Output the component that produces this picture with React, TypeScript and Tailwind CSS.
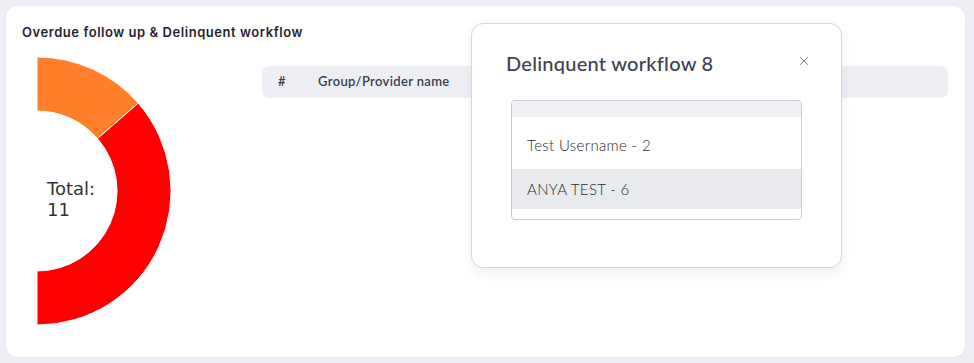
import { X } from 'lucide-react';

const workflowItems = [
  { id: 'u-1', label: 'Test Username - 2', active: false },
  { id: 'u-2', label: 'ANYA TEST - 6', active: true },
];

const DonutChart = () => {
  return (
    <div className="relative w-[134px] h-[268px] shrink-0">
      <svg width="134" height="268" viewBox="0 0 134 268">
        <path
          d="M0 0 A134 134 0 0 1 101.3 46.2 L60.5 81.6 A80 80 0 0 0 0 54 Z"
          fill="#ff7f2a"
          stroke="#ffffff"
          strokeWidth="1"
        />
        <path
          d="M101.3 46.2 A134 134 0 0 1 0 268 L0 214 A80 80 0 0 0 60.5 81.6 Z"
          fill="#ff0000"
          stroke="#ffffff"
          strokeWidth="1"
        />
      </svg>
      <p
        className="absolute left-[10px] top-[121px] text-[18px] leading-[21px] text-[#333333]"
        style={{ fontFamily: '"DejaVu Sans", sans-serif' }}
      >
        Total:
        <br />
        11
      </p>
    </div>
  );
};

const App = () => {
  return (
    <div
      className="relative w-[974px] h-[363px] bg-[#eeeef4] p-[6px] pr-[9px] pb-[6px]"
      style={{ fontFamily: 'Lato, "Noto Sans", sans-serif' }}
    >
      <div className="h-full bg-white rounded-[12px] pl-4 pr-[17px] pt-[18px] shadow-[0_0_4px_rgba(0,0,0,0.04)]">
        <h2
          className="text-[13px] leading-4 font-semibold tracking-[0.55px] text-[#1f2430]"
          style={{ fontFamily: 'Inter, sans-serif' }}
        >
          Overdue follow up &amp; Delinquent workflow
        </h2>

        <div className="flex mt-[17px]">
          <div className="ml-[15px]">
            <DonutChart />
          </div>

          <div className="flex-1 ml-[91px] mt-[9px]">
            <div className="flex items-center h-8 rounded-[7px] bg-[#eeeff4] text-[13px] font-semibold tracking-[0.35px] text-[#3a3f4b]">
              <span className="ml-4 w-10">#</span>
              <span>Group/Provider name</span>
            </div>
          </div>
        </div>
      </div>

      {/* modal */}
      <div className="absolute left-[471px] top-[23px] w-[371px] h-[245px] bg-white border border-[#d6d6da] rounded-[12px] shadow-[0_6px_14px_rgba(0,0,0,0.06)]">
        <div className="flex items-center justify-between pl-[34px] pr-[30px] pt-[25px]">
          <h3 className="text-[20px] leading-7 font-medium tracking-[0.25px] text-[#3c4250]">
            Delinquent workflow 8
          </h3>
          <button type="button" className="text-[#6b7280] -mt-[5px]">
            <X size={14} strokeWidth={1.5} />
          </button>
        </div>

        <div className="mx-[39px] mt-[23px] w-[291px] border border-[#c8ccd4] rounded-[4px] overflow-hidden pb-[10px]">
          <div className="h-4 bg-[#eff1f5]" />
          <ul className="mt-2">
            {workflowItems.map((item, index) => (
              <li
                key={item.id}
                className={`flex items-center h-10 px-[15px] text-[15px] font-light tracking-[0.35px] text-[#2b2b2b] ${
                  item.active ? 'bg-[#e8eaed]' : 'bg-white'
                } ${index === 0 ? '' : 'mt-1'}`}
              >
                {item.label}
              </li>
            ))}
          </ul>
        </div>
      </div>
    </div>
  );
};

export default App;
